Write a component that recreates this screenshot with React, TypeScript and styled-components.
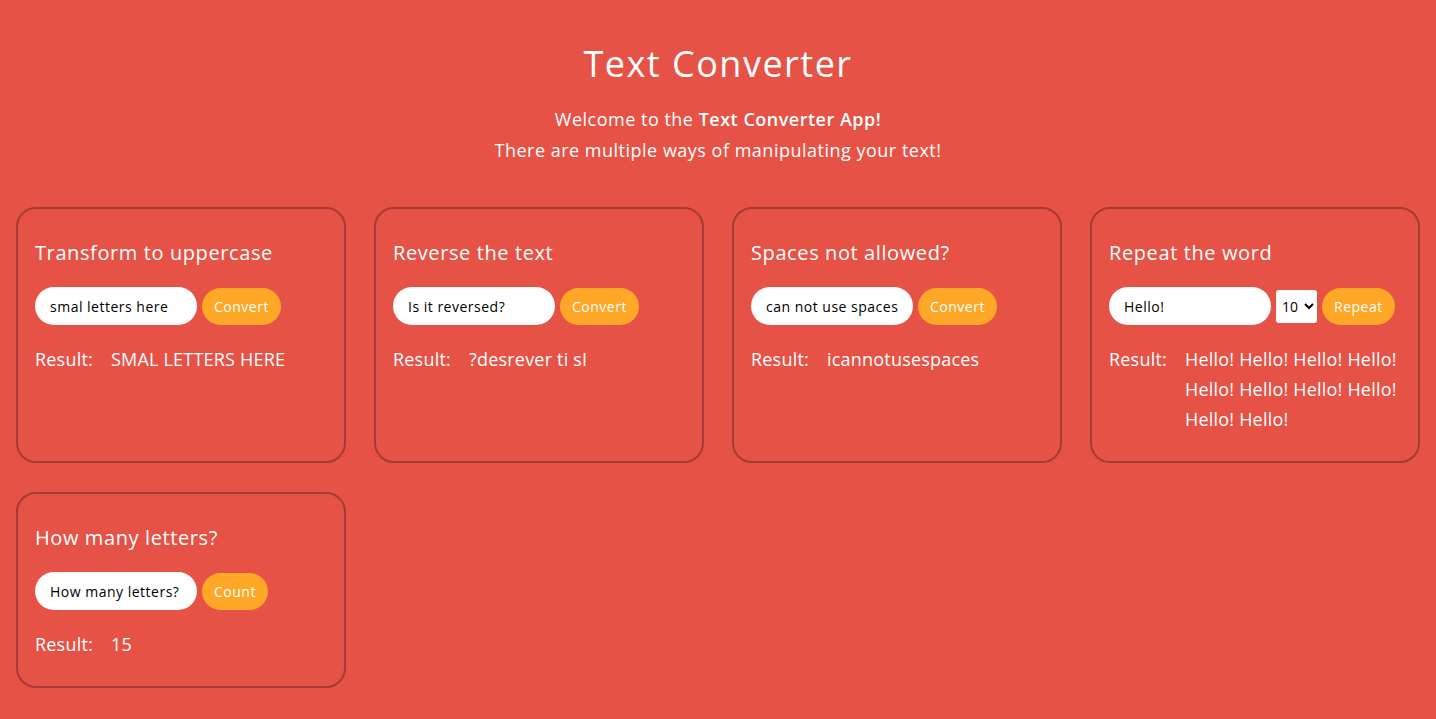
import React, { useState } from "react"
import styled, { createGlobalStyle } from "styled-components"

const GlobalStyle = createGlobalStyle`
  body {
    margin: 0;
    background-color: #e65346;
    font-family: "Open Sans", "Liberation Sans", sans-serif;
    color: #ffffff;
  }
  * {
    box-sizing: border-box;
  }
`

const Page = styled.div`
  padding-bottom: 30px;
`

const Header = styled.header`
  text-align: center;
  padding-top: 42px;
`

const Title = styled.h1`
  margin: 0;
  font-size: 36px;
  font-weight: 400;
  line-height: 43px;
  letter-spacing: 1.5px;
`

const Intro = styled.p`
  margin: 19px 0 0;
  font-size: 18px;
  line-height: 31px;
  letter-spacing: 0.5px;

  strong {
    font-weight: 600;
  }
`

const Grid = styled.main`
  display: grid;
  grid-template-columns: repeat(4, 1fr);
  gap: 29px 28px;
  padding: 0 16px;
  margin-top: 41px;
`

const Card = styled.section`
  border: 2px solid #a63b31;
  border-radius: 20px;
  padding: 27px 17px 27px;
`

const CardTitle = styled.h2`
  margin: 0;
  font-size: 20px;
  font-weight: 400;
  line-height: 34px;
  letter-spacing: 0.6px;
`

const Controls = styled.div`
  display: flex;
  align-items: center;
  gap: 5px;
  margin-top: 17px;
`

const TextInput = styled.input`
  width: 162px;
  height: 38px;
  border: none;
  border-radius: 19px;
  padding: 0 15px;
  font-family: inherit;
  font-size: 14px;
  letter-spacing: 0.5px;
  color: #000000;
  background: #ffffff;
  outline: none;
`

const Select = styled.select`
  width: 41px;
  height: 33px;
  border: none;
  border-radius: 3px;
  padding: 0 0 0 2px;
  font-family: inherit;
  font-size: 14px;
  color: #000000;
  background: #ffffff;
`

const Button = styled.button`
  height: 37px;
  border: none;
  border-radius: 19px;
  padding: 0 12px;
  background-color: #ffa726;
  color: #ffffff;
  font-family: inherit;
  font-size: 14px;
  letter-spacing: 0.5px;
  cursor: pointer;
`

const ResultRow = styled.div`
  display: flex;
  margin-top: 19px;
  font-size: 18px;
  line-height: 30px;
  letter-spacing: 0.2px;
`

const ResultLabel = styled.span`
  flex-shrink: 0;
  width: 76px;
`

const ResultValue = styled.span`
  flex: 1;
`

interface ToolProps {
  title: string
  initial: string
  action: string
  result: string
  withCount?: boolean
}

const Tool: React.FC<ToolProps> = ({ title, initial, action, result, withCount }) => {
  const [value, setValue] = useState(initial)
  return (
    <Card>
      <CardTitle>{title}</CardTitle>
      <Controls>
        <TextInput value={value} onChange={(e) => setValue(e.target.value)} />
        {withCount && (
          <Select defaultValue="10">
            {Array.from({ length: 10 }, (_, i) => (
              <option key={i + 1} value={String(i + 1)}>
                {i + 1}
              </option>
            ))}
          </Select>
        )}
        <Button>{action}</Button>
      </Controls>
      <ResultRow>
        <ResultLabel>Result:</ResultLabel>
        <ResultValue>{result}</ResultValue>
      </ResultRow>
    </Card>
  )
}

export default function App() {
  return (
    <Page>
      <GlobalStyle />
      <Header>
        <Title>Text Converter</Title>
        <Intro>
          Welcome to the <strong>Text Converter App!</strong>
          <br />
          There are multiple ways of manipulating your text!
        </Intro>
      </Header>
      <Grid>
        <Tool title="Transform to uppercase" initial="smal letters here" action="Convert" result="SMAL LETTERS HERE" />
        <Tool title="Reverse the text" initial="Is it reversed?" action="Convert" result="?desrever ti sI" />
        <Tool title="Spaces not allowed?" initial="can not use spaces" action="Convert" result="icannotusespaces" />
        <Tool
          title="Repeat the word"
          initial="Hello!"
          action="Repeat"
          result={Array(10).fill("Hello!").join(" ")}
          withCount
        />
        <Tool title="How many letters?" initial="How many letters?" action="Count" result="15" />
      </Grid>
    </Page>
  )
}
